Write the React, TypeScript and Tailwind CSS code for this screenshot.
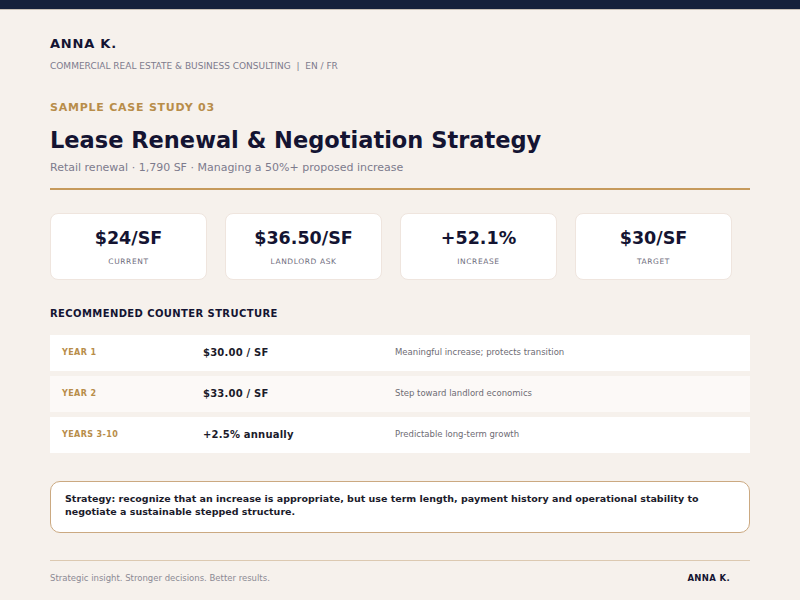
export default function App() {
  const stats = [
    { value: '$24/SF', label: 'CURRENT' },
    { value: '$36.50/SF', label: 'LANDLORD ASK' },
    { value: '+52.1%', label: 'INCREASE' },
    { value: '$30/SF', label: 'TARGET' },
  ]

  const rows = [
    { term: 'YEAR 1', rate: '$30.00 / SF', note: 'Meaningful increase; protects transition', tint: false },
    { term: 'YEAR 2', rate: '$33.00 / SF', note: 'Step toward landlord economics', tint: true },
    { term: 'YEARS 3-10', rate: '+2.5% annually', note: 'Predictable long-term growth', tint: false },
  ]

  return (
    <div className="w-[800px] h-[600px] overflow-hidden bg-[#f6f1ec] font-['DejaVu_Sans',sans-serif]">
      {/* Top bar */}
      <div className="h-[9px] bg-[#16213b]" />
      <div className="h-px bg-[#c9c0b6]" />

      <div className="px-[50px]">
        {/* Header */}
        <div className="pt-[26px]">
          <div className="text-[13px] leading-[16px] font-bold tracking-[0.06em] text-[#141432]">ANNA K.</div>
          <div className="mt-[8px] text-[9px] leading-[12px] text-[#7d7b8c]">
            COMMERCIAL REAL ESTATE &amp; BUSINESS CONSULTING &nbsp;|&nbsp; EN / FR
          </div>
        </div>

        {/* Title block */}
        <div className="pt-[29px]">
          <div className="text-[11px] leading-[14px] font-bold tracking-[0.07em] text-[#b88d4a]">SAMPLE CASE STUDY 03</div>
          <h1 className="mt-[10px] text-[22.5px] leading-[30px] font-bold text-[#141432]">
            Lease Renewal &amp; Negotiation Strategy
          </h1>
          <p className="mt-[5px] text-[11px] leading-[16px] text-[#7d7b8c]">
            Retail renewal · 1,790 SF · Managing a 50%+ proposed increase
          </p>
          <div className="mt-[12px] h-[1.5px] bg-[#c69a5c]" />
        </div>

        {/* Stat cards */}
        <div className="mt-[23px] flex gap-[18px]">
          {stats.map((s) => (
            <div
              key={s.label}
              className="w-[157px] h-[67px] rounded-[8px] bg-white border border-[#efe5de] flex flex-col items-center pt-[13px]"
            >
              <div className="text-[17.5px] leading-[22px] font-bold text-[#141432]">{s.value}</div>
              <div className="mt-[8px] text-[7.5px] leading-[10px] tracking-[0.08em] text-[#6e6c7c]">{s.label}</div>
            </div>
          ))}
        </div>

        {/* Counter structure */}
        <div className="mt-[27px] text-[10px] leading-[14px] font-bold tracking-[0.04em] text-[#141432]">
          RECOMMENDED COUNTER STRUCTURE
        </div>
        <div className="mt-[14px] flex flex-col gap-[5px]">
          {rows.map((r) => (
            <div
              key={r.term}
              className={`h-[36px] grid grid-cols-[141px_192px_1fr] items-center pl-3 ${r.tint ? 'bg-[#fcf9f7]' : 'bg-white'}`}
            >
              <div className="text-[8px] font-bold tracking-[0.05em] text-[#b88d4a]">{r.term}</div>
              <div className="text-[10px] font-bold tracking-[0.02em] text-[#1b1b2b]">{r.rate}</div>
              <div className="text-[8.5px] text-[#6e6c74]">{r.note}</div>
            </div>
          ))}
        </div>

        {/* Strategy note */}
        <div className="mt-[28px] h-[52px] rounded-[10px] border border-[#cba981] bg-white px-[14px] pt-[10px]">
          <p className="text-[9.5px] leading-[13px] font-bold text-[#1b1b2b]">
            Strategy: recognize that an increase is appropriate, but use term length, payment history and operational
            stability to negotiate a sustainable stepped structure.
          </p>
        </div>

        {/* Footer */}
        <div className="mt-[27px] h-[1.5px] bg-[#dcc9b1]" />
        <div className="mt-[11px] flex items-center justify-between pr-[20px]">
          <span className="text-[8.5px] text-[#8c8a94]">Strategic insight. Stronger decisions. Better results.</span>
          <span className="text-[8.5px] font-bold tracking-[0.04em] text-[#141432]">ANNA K.</span>
        </div>
      </div>
    </div>
  )
}
